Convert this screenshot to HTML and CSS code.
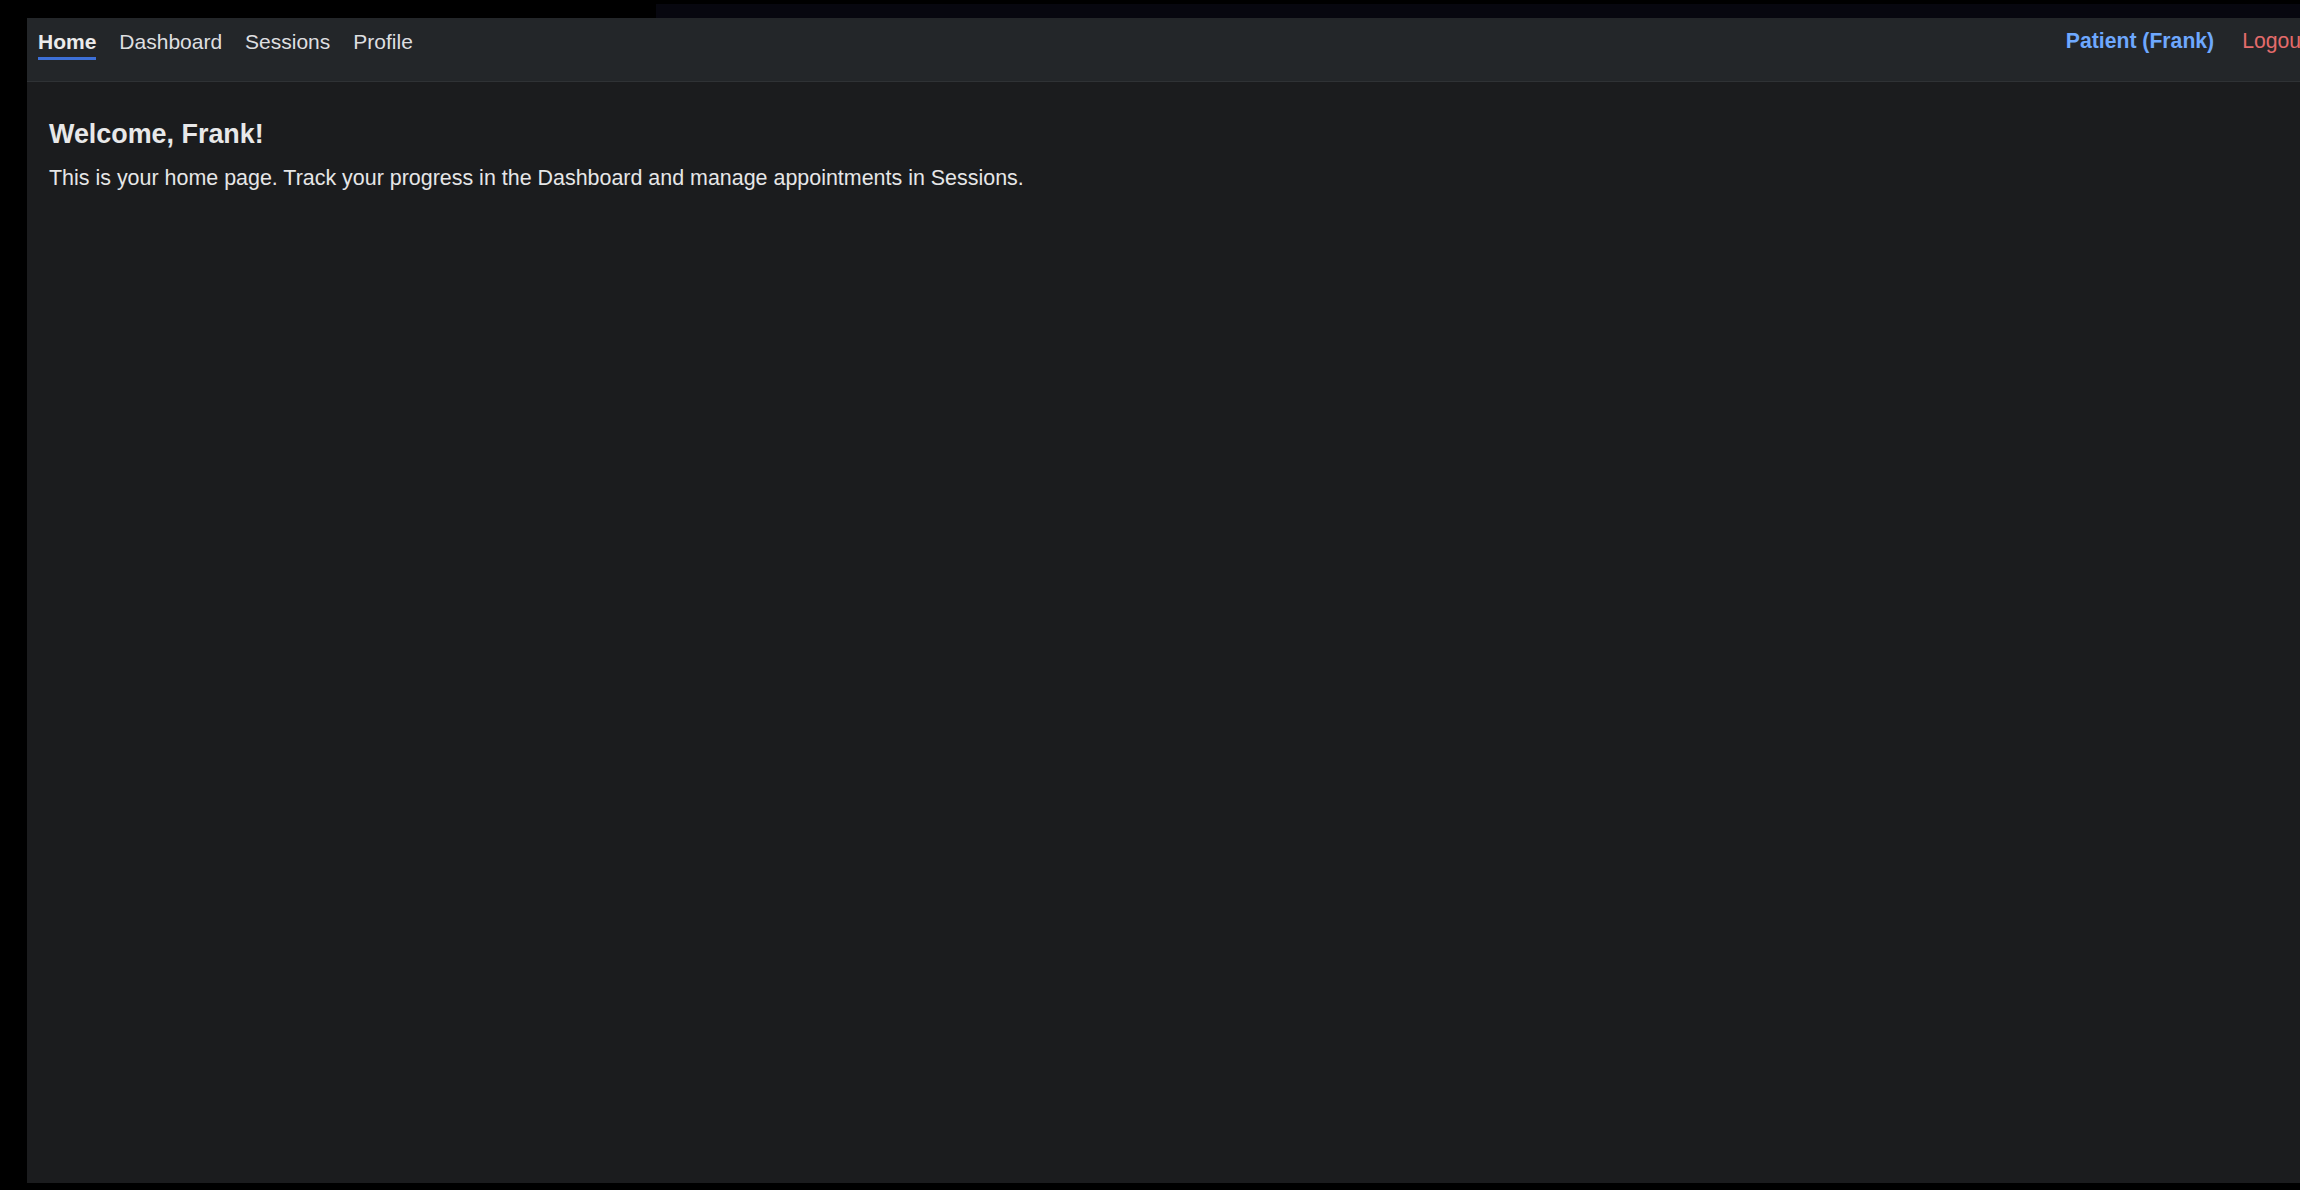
FILE: index.html
```html
<!DOCTYPE html>
<html lang="en">
<head>
<meta charset="utf-8">
<title>Home</title>
<link rel="stylesheet" href="styles.css">
</head>
<body>
<div class="backdrop"></div>
<div class="window">
  <nav class="navbar">
    <ul class="nav-links">
      <li><a class="nav-link active" href="#">Home</a></li>
      <li><a class="nav-link" href="#">Dashboard</a></li>
      <li><a class="nav-link" href="#">Sessions</a></li>
      <li><a class="nav-link" href="#">Profile</a></li>
    </ul>
    <div class="nav-user">
      <span class="user-name">Patient (Frank)</span>
      <a class="logout" href="#">Logout</a>
    </div>
  </nav>
  <main class="content">
    <h1 class="title">Welcome, Frank!</h1>
    <p class="intro">This is your home page. Track your progress in the Dashboard and manage appointments in Sessions.</p>
  </main>
</div>
</body>
</html>
```

FILE: styles.css
```css
html, body {
  margin: 0;
  padding: 0;
  overflow: hidden;
  background: #000;
  height: 1190px;
}

body {
  font-family: "Liberation Sans", Arial, Helvetica, sans-serif;
}

.backdrop {
  height: 14px;
  margin: 4px 0 0 656px;
  background: #07070f;
}

.window {
  margin-left: 27px;
  width: 2292px;
  height: 1165px;
  background: #1b1c1e;
  display: flex;
  flex-direction: column;
}

.navbar {
  display: flex;
  justify-content: space-between;
  align-items: flex-start;
  background: #232629;
  border-bottom: 1px solid #2f3235;
  padding: 12px 12px 0 11px;
  height: 51px;
}

.nav-links {
  list-style: none;
  display: flex;
  gap: 23px;
  margin: 0;
  padding: 0;
}

.nav-link {
  display: block;
  font-size: 21px;
  line-height: 24px;
  color: #dedfe0;
  text-decoration: none;
  padding-bottom: 3px;
  border-bottom: 3px solid transparent;
}

.nav-link.active {
  font-weight: 700;
  color: #ebebec;
  border-bottom-color: #3d70d8;
}

.nav-user {
  display: flex;
  gap: 28px;
  margin-top: -1px;
  font-size: 21.2px;
  line-height: 24px;
}

.user-name {
  color: #6ea8fe;
  font-weight: 700;
}

.logout {
  color: #e46b6b;
  text-decoration: none;
}

.content {
  padding: 37px 22px;
  color: #e6e6e7;
}

.title {
  margin: 0 0 17px;
  font-size: 26.9px;
  line-height: 30px;
  font-weight: 700;
  color: #e8e8e9;
}

.intro {
  margin: 0;
  font-size: 21.45px;
  line-height: 24px;
}
```
